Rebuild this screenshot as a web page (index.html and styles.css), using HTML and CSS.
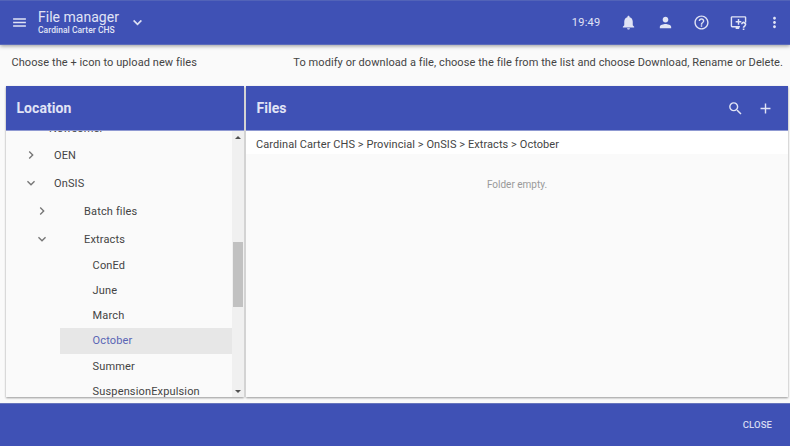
FILE: index.html
```html
<!DOCTYPE html>
<html lang="en">
<head>
<meta charset="utf-8">
<title>File manager</title>
<link rel="stylesheet" href="styles.css">
</head>
<body>
<header class="topbar">
  <svg class="icon menu" viewBox="0 0 24 24"><path d="M3 18h18v-2H3v2zm0-5h18v-2H3v2zm0-7v2h18V6H3z"/></svg>
  <div class="titles">
    <h1>File manager</h1>
    <p>Cardinal Carter CHS</p>
  </div>
  <svg class="icon drop" viewBox="0 0 24 24"><path d="M7.41 8.59 12 13.17l4.59-4.58L18 10l-6 6-6-6z"/></svg>
  <span class="clock">19:49</span>
  <nav class="actions">
    <svg class="icon" viewBox="0 0 24 24"><path d="M12 22c1.1 0 2-.9 2-2h-4c0 1.1.89 2 2 2zm6-6v-5c0-3.07-1.64-5.64-4.5-6.32V4c0-.83-.67-1.5-1.5-1.5s-1.5.67-1.5 1.5v.68C7.63 5.36 6 7.92 6 11v5l-2 2v1h16v-1l-2-2z"/></svg>
    <svg class="icon" viewBox="0 0 24 24"><path d="M12 12c2.21 0 4-1.79 4-4s-1.790-4-4-4-4 1.790-4 4 1.790 4 4 4zm0 2c-2.670 0-8 1.340-8 4v2h16v-2c0-2.660-5.330-4-8-4z"/></svg>
    <svg class="icon" viewBox="0 0 24 24"><path d="M11 18h2v-2h-2v2zm1-16C6.480 2 2 6.480 2 12s4.480 10 10 10 10-4.480 10-10S17.520 2 12 2zm0 18c-4.410 0-8-3.590-8-8s3.590-8 8-8 8 3.590 8 8-3.590 8-8 8zm0-14c-2.210 0-4 1.790-4 4h2c0-1.100.9-2 2-2s2 .9 2 2c0 2-3 1.750-3 5h2c0-2.250 3-2.500 3-5 0-2.210-1.790-4-4-4z"/></svg>
    <svg class="icon" viewBox="0 0 24 24"><path d="M3 3h18a2 2 0 0 1 2 2v7h-2V5H3v12h11v2h-1v2H8v-2H3a2 2 0 0 1-2-2V5c0-1.100.9-2 2-2z"/><path d="M11 7h2v3h3v2h-3v3h-2v-3H8v-2h3z"/><path d="M15.500 14.500a3.800 3.800 0 1 1 6.200 3c-.9.800-1.400 1.100-1.400 2h-2.300c0-1.800 1-2.400 1.900-3.300a1.500 1.500 0 1 0-2.200-1.700zM18 20.500h2.300v2H18z"/></svg>
    <svg class="icon" viewBox="0 0 24 24"><path d="M12 8c1.100 0 2-.9 2-2s-.9-2-2-2-2 .9-2 2 .9 2 2 2zm0 2c-1.100 0-2 .9-2 2s.9 2 2 2 2-.9 2-2-.9-2-2-2zm0 6c-1.100 0-2 .9-2 2s.9 2 2 2 2-.9 2-2-.9-2-2-2z"/></svg>
  </nav>
</header>
<div class="hints">
  <span class="hint-upload">Choose the + icon to upload new files</span>
  <span class="hint-modify">To modify or download a file, choose the file from the list and choose Download, Rename or Delete.</span>
</div>
<main class="panels">
  <section class="panel location">
    <h2 class="panel-head">Location</h2>
    <div class="tree-wrap">
      <ul class="tree">
        <li class="branch first"><span>Newcomer</span></li>
        <li class="branch"><svg class="chev" viewBox="0 0 24 24"><path d="M8.590 16.590 13.170 12 8.590 7.410 10 6l6 6-6 6z"/></svg><span>OEN</span></li>
        <li class="branch"><svg class="chev" viewBox="0 0 24 24"><path d="M7.410 8.590 12 13.170l4.590-4.580L18 10l-6 6-6-6z"/></svg><span>OnSIS</span></li>
        <li class="branch sub"><svg class="chev" viewBox="0 0 24 24"><path d="M8.590 16.590 13.170 12 8.590 7.410 10 6l6 6-6 6z"/></svg><span>Batch files</span></li>
        <li class="branch sub"><svg class="chev" viewBox="0 0 24 24"><path d="M7.410 8.590 12 13.170l4.590-4.580L18 10l-6 6-6-6z"/></svg><span>Extracts</span></li>
        <li class="leaf">ConEd</li>
        <li class="leaf">June</li>
        <li class="leaf">March</li>
        <li class="leaf selected">October</li>
        <li class="leaf">Summer</li>
        <li class="leaf">SuspensionExpulsion</li>
      </ul>
      <div class="scrollbar">
        <i class="arrow up"></i>
        <i class="thumb"></i>
        <i class="arrow down"></i>
      </div>
    </div>
  </section>
  <section class="panel files">
    <div class="panel-head">
      <h2>Files</h2>
      <svg class="icon search" viewBox="0 0 24 24"><path d="M15.500 14h-.79l-.28-.27A6.471 6.471 0 0 0 16 9.500 6.500 6.500 0 1 0 9.500 16c1.610 0 3.090-.59 4.230-1.570l.27.28v.79l5 4.990L20.490 19l-4.990-5zm-6 0C7.010 14 5 11.990 5 9.500S7.010 5 9.500 5 14 7.010 14 9.500 11.990 14 9.500 14z"/></svg>
      <svg class="icon" viewBox="0 0 24 24"><path d="M19 13h-6v6h-2v-6H5v-2h6V5h2v6h6v2z"/></svg>
    </div>
    <div class="crumbs"><span>Cardinal Carter CHS &gt; Provincial &gt; OnSIS &gt; Extracts &gt; October</span></div>
    <p class="empty">Folder empty.</p>
  </section>
</main>
<footer class="footer"><button type="button">CLOSE</button></footer>
</body>
</html>
```
FILE: styles.css
```css
* { box-sizing: border-box; }
body {
  margin: 0;
  width: 790px;
  height: 446px;
  overflow: hidden;
  display: flex;
  flex-direction: column;
  background: #fafafa;
  color: #444;
  font: 11px/16px Roboto, sans-serif;
  letter-spacing: 0.07px;
}
h1, h2, p, ul { margin: 0; padding: 0; }
svg { display: block; fill: currentColor; flex: none; }
.icon { width: 17px; height: 17px; }

.topbar {
  position: relative;
  height: 45px;
  flex: none;
  display: flex;
  align-items: center;
  padding: 0 7px 0 11px;
  background: #3f51b5;
  border-top: 1px solid #5263b8;
  border-bottom: 1px solid #5c6bba;
  box-shadow: 0 1px 4px rgba(0, 0, 0, .4);
  color: #e1e4f5;
}
.titles { margin-left: 10px; width: 84px; white-space: nowrap; }
.titles h1 { font-size: 14px; line-height: 15px; font-weight: 400; letter-spacing: 0.02px; }
.titles p { font-size: 8.5px; line-height: 11px; font-weight: 500; letter-spacing: 0.03px; }
.drop { margin-left: 7px; stroke: currentColor; stroke-width: .5; }
.clock { margin-left: auto; font-size: 11px; letter-spacing: 0.25px; }
.actions { display: flex; margin-left: 20px; gap: 19.4px; }

.hints {
  height: 41px;
  flex: none;
  display: flex;
  justify-content: space-between;
  padding: 10px 7px 0 11.5px;
  white-space: nowrap;
}

.panels {
  height: 311px;
  flex: none;
  display: flex;
  gap: 2px;
  padding: 0 2px 0 6px;
}
.panel { box-shadow: 0 1px 2px rgba(0, 0, 0, .4); background: #fafafa; }
.location { width: 238px; }
.files { flex: 1; }
.panel-head {
  height: 45px;
  display: flex;
  align-items: center;
  padding: 0 14px 0 10.5px;
  border-bottom: 1px solid #8f99d2;
  background: #3f51b5;
  color: #e1e4f5;
  font-size: 14px;
  font-weight: 700;
  letter-spacing: 0.05px;
}
.panel-head h2 { font-size: 14px; letter-spacing: 0.05px; }
.search { margin-left: auto; margin-right: 13px; }

.tree-wrap { height: 266px; display: flex; overflow: hidden; }
.tree { flex: 1; list-style: none; white-space: nowrap; letter-spacing: 0.15px; }
.branch { height: 28px; display: flex; align-items: center; padding-left: 17px; }
.first { margin-top: -18px; padding: 4px 0 0 43px; }
.chev { width: 16px; height: 16px; color: #757575; }
.branch .chev + span { margin-left: 15px; padding-top: 1px; }
.sub { padding-left: 28px; }
.sub .chev + span { margin-left: 34px; }
.leaf { height: 25.15px; margin-left: 54px; padding-left: 32.6px; line-height: 25px; }
.selected { background: #e7e7e7; color: #5965b5; }

.scrollbar {
  width: 12px;
  display: flex;
  flex-direction: column;
  align-items: center;
  background: #f0f0f0;
}
.arrow { border: 3px solid transparent; }
.up { border-top: 0; border-bottom-color: #505050; margin-top: 5px; }
.thumb { width: 10px; height: 65px; margin-top: 103px; background: #c1c1c1; }
.down { border-bottom: 0; border-top-color: #505050; margin-top: auto; margin-bottom: 4px; }

.crumbs { height: 23px; padding: 6px 10px 0; background: #fff; }
.empty { padding-top: 23px; text-align: center; font-size: 10px; letter-spacing: 0; color: #999; }

.footer {
  height: 43px;
  margin-top: auto;
  display: flex;
  justify-content: flex-end;
  align-items: center;
  padding-right: 18px;
  border-top: 1px solid #6876bd;
  background: #3f51b5;
}
.footer button {
  border: 0;
  padding: 0;
  background: none;
  color: #d5d9f1;
  font: 500 9.5px/16px Roboto, sans-serif;
  letter-spacing: 0.1px;
}
```
